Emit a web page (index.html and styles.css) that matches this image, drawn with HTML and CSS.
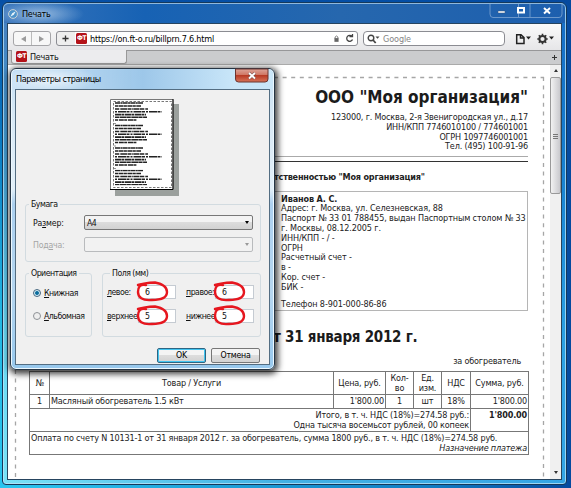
FILE: index.html
```html
<!DOCTYPE html>
<html lang="ru">
<head>
<meta charset="utf-8">
<title>Печать</title>
<link rel="stylesheet" href="styles.css">
</head>
<body>
<main class="window">
  <header class="titlebar">
    <svg class="compass" viewBox="0 0 10 10"><circle cx="5" cy="5" r="4.4" fill="#4d93ca" stroke="#c7d0d5"/><path d="M7.8 2.2 4.2 4.2 2.3 7.8 5.8 5.8Z" fill="#e9f5fb"/></svg>
    <span class="win-name">Печать</span>
    <div class="win-buttons">
      <svg viewBox="0 0 72 14"><path d="M0 0V10Q0 13.5 3 13.5H69Q72 13.5 72 10V0M28.500 0V13M40 0V13" transform="translate(-1 0)" fill="none" stroke="#6b97cb"/><path d="M7 7h7v2H7Z" fill="#fff" stroke="#3a5578" stroke-width=".5"/><path d="M27 4h6v4.500h-6Z" fill="none" stroke="#fff" stroke-width="2"/><path d="M53 4l6 5.500M59 4l-6 5.500" stroke="#fff" stroke-width="2"/></svg>
    </div>
  </header>
  <div class="client">
    <nav class="toolbar">
      <div class="navs"><i class="back"></i><i class="fwd"></i></div>
      <div class="address"><svg class="plus" viewBox="0 0 8 8"><path d="M4 .5v7M.5 4h7" stroke="#333" stroke-width="1.500"/></svg><b class="fav">ФТ</b><span class="url">https://on.ft-o.ru/billprn.7.6.html</span>
        <svg class="lock" viewBox="0 0 6 8"><path d="M1.300 4V2.200Q3-.3 4.700 2.200V4" fill="none" stroke="#666"/><path d="M.5 3.500h5V8h-5Z" fill="#666"/></svg>
        <svg class="reload" viewBox="0 0 9 9"><path d="M7 2.400A3 3 0 1 0 7.500 5.500M4.500 2.700H7.500V0" fill="none" stroke="#444" stroke-width="1.300"/></svg></div>
      <div class="search"><svg viewBox="0 0 13 10"><circle cx="4" cy="4" r="2.800" fill="none" stroke="#444" stroke-width="1.400"/><path d="M6 6l2.700 3" stroke="#444" stroke-width="1.800"/><path d="M8.500 2.500h4l-2 2.200Z" fill="#444"/></svg><span>Google</span></div>
      <svg class="tools" viewBox="0 0 40 12"><path d="M2.700 1.800H7L10 4.500V10.500H2.700ZM6.500 2V5H10" fill="none" stroke="#222" stroke-width="1.500"/><path d="M12 3.500h5l-2.500 3ZM35 3.500h5l-2.500 3Z" fill="#222"/><circle cx="28.500" cy="6" r="3.100" fill="none" stroke="#333" stroke-width="2"/><path d="M28.500 .8V2.500M28.500 9.500V11.200M23.300 6H25M32 6h1.700M24.800 2.300l1.400 1.400M30.800 8.300l1.400 1.400M32.200 2.300l-1.400 1.400M26.200 8.300l-1.400 1.400" stroke="#333" stroke-width="1.600"/></svg>
    </nav>
    <div class="tabs"><div class="tab"><b class="fav">ФТ</b><span>Печать</span></div><svg viewBox="0 0 7 7"><path d="M3.500 1v5M1 3.500h5" stroke="#333"/></svg></div>
    <div class="view">
      <div class="page">
        <svg class="cut" viewBox="0 0 544 414"><path d="M8 12.500H536M535.500 12V414" fill="none" stroke="#a6a6a6" stroke-width="1.300" stroke-dasharray="4 4.600"/><path d="M7.500 12.500V414" fill="none" stroke="#a6a6a6" stroke-width="1.300" stroke-dasharray="4 4.600"/></svg>
        <article class="bill">
          <h1><span>ООО "Моя организация"</span></h1>
          <div class="requisites">
            <p>123000, г. Москва, 2-я Звенигородская ул., д.17</p>
            <p>ИНН/КПП 7746010100 / 774601001</p>
            <p>ОГРН 1097746001001</p>
            <p>Тел. (495) 100-91-96</p>
          </div>
          <div class="rules"></div>
          <p class="supplier">тственностью "Моя организация"</p>
          <div class="payer">
            <p><b>Иванов А. С.</b></p><p>Адрес: г. Москва, ул. Селезневская, 88</p><p>Паспорт № 33 01 788455, выдан Паспортным столом № 33</p><p>г. Москвы, 08.12.2005 г.</p><p>ИНН/КПП - / -</p><p>ОГРН</p><p>Расчетный счет -</p><p>в -</p><p>Кор. счет -</p><p>БИК -</p><p class="tel">Телефон 8-901-000-86-86</p>
          </div>
          <h2>от 31 января 2012 г.</h2>
          <p class="subject">за обогреватель</p>
          <table>
            <colgroup><col class="c1"><col class="c2"><col class="c3"><col class="c4"><col class="c5"><col class="c6"><col class="c7"></colgroup>
            <tr class="head"><th>№</th><th>Товар / Услуги</th><th>Цена, руб.</th><th>Кол-<br>во</th><th>Ед.<br>изм.</th><th>НДС</th><th>Сумма, руб.</th></tr>
            <tr class="item"><td class="mid">1</td><td>Масляный обогреватель 1.5 кВт</td><td class="num">1'800.00</td><td class="mid">1</td><td class="mid">шт</td><td class="mid">18%</td><td class="num">1'800.00</td></tr>
            <tr class="total"><td class="num" colspan="6">Итого, в т. ч. НДС (18%)=274.58 руб.:<br>Одна тысяча восемьсот рублей, 00 копеек</td><td class="num"><b>1'800.00</b></td></tr>
            <tr class="total"><td colspan="7" class="pay">Оплата по счету N 10131-1 от 31 января 2012 г. за обогреватель, сумма 1800 руб., в т. ч. НДС (18%)=274.58 руб.<em>Назначение платежа</em></td></tr>
          </table>
        </article>
      </div>
      <div class="scroll"><i class="up"></i><div class="thumb"></div><i class="down"></i></div>
    </div>
  </div>
</main>

<section class="dialog">
  <header class="dlg-title"><span>Параметры страницы</span>
    <svg viewBox="0 0 34 14"><defs><linearGradient id="red" x2="0" y2="1"><stop offset="0" stop-color="#dda59a"/><stop offset=".48" stop-color="#cf7461"/><stop offset=".5" stop-color="#b83b25"/><stop offset="1" stop-color="#d8755b"/></linearGradient></defs><path d="M.5 0H33V10Q33 13 30 13H3.500Q.5 13 .5 10Z" fill="url(#red)" stroke="#6d342f"/><path d="M14 4l6 5.500M20 4l-6 5.500" stroke="#735050" stroke-width="3"/><path d="M14 4l6 5.500M20 4l-6 5.500" stroke="#fff" stroke-width="1.800"/></svg>
  </header>
  <div class="dlg-body">
    <svg class="sheet" viewBox="0 0 69 97"><path d="M5 5H69V97H5Z" fill="#9ba09d"/><path d="M.5 .5H63V90.500H.5Z" fill="#fff" stroke="#777"/><path d="M63 0V90.500H0" fill="none" stroke="#000"/><path d="M3.500 2.500H61.500V88.500H3.500Z" fill="none" stroke="#555" stroke-width=".8" stroke-dasharray="2.500 1.500"/>
      <defs><g id="lines" fill="none" stroke="#222" stroke-width="1.600"><path d="M5 4H33" stroke-dasharray="5 .4 2 .3"/><path d="M5 7H31" stroke-dasharray="3 .5 5 .4"/><path d="M5 10H38" stroke-dasharray="4 .7 1 .3 6 .5"/><path d="M5 12.800H52" stroke-dasharray="2 1 8 .5 3 1"/><path d="M5 15.600H36" stroke-dasharray="6 .4 3 .6"/><path d="M5 18.300H37" stroke-dasharray="4 .5 7 .3"/><path d="M5 21H27" stroke-dasharray="3 .8 5 .4"/></g></defs>
      <use href="#lines"/><use href="#lines" y="22.500"/><use href="#lines" y="45"/><use href="#lines" y="67.500" clip-path="inset(0 0 3px 0)"/>
      <path d="M4.500 24.500h1M4.500 47h1M4.500 69.500h1" stroke="#333"/></svg>
    <fieldset class="paper"><legend>Бумага</legend>
      <label>Ра<u>з</u>мер:</label><div class="select"><span>A4</span><i></i></div>
      <label class="off">Под<u>а</u>ча:</label><div class="select off"><span></span><i></i></div>
    </fieldset>
    <div class="groups">
      <fieldset class="orient"><legend>Ориентация</legend>
        <label><i class="radio on"></i><span><u>К</u>нижная</span></label>
        <label><i class="radio"></i><span><u>А</u>льбомная</span></label>
      </fieldset>
      <fieldset class="margins"><legend>Поля (мм)</legend>
        <label><u>л</u>евое:</label><div class="field">6<svg viewBox="0 0 33 21"><path d="M2 4Q8 2 19 1.500C27 3 31 6 31 11C31 17 25 19 16 19C6 20 2 16 2 11C2 6 4 3 10 4" /></svg></div>
        <label class="right"><u>п</u>равое:</label><div class="field">6<svg viewBox="0 0 33 21"><path d="M2 4Q8 2 19 1.500C27 3 31 6 31 11C31 17 25 19 16 19C6 20 2 16 2 11C2 6 4 3 10 4" /></svg></div>
        <label><u>в</u>ерхнее</label><div class="field">5<svg viewBox="0 0 33 21"><path d="M2 4Q8 2 19 1.500C27 3 31 6 31 11C31 17 25 19 16 19C6 20 2 16 2 11C2 6 4 3 10 4" /></svg></div>
        <label class="right"><u>н</u>ижнее</label><div class="field">5<svg viewBox="0 0 33 21"><path d="M2 4Q8 2 19 1.500C27 3 31 6 31 11C31 17 25 19 16 19C6 20 2 16 2 11C2 6 4 3 10 4" /></svg></div>
      </fieldset>
    </div>
    <div class="actions"><button class="ok">OK</button><button>Отмена</button></div>
  </div>
</section>
</body>
</html>
```
FILE: styles.css
```css
* { box-sizing: border-box; }
body, p, h1, h2, fieldset { margin: 0; padding: 0; }
i { font-style: normal; }
svg { display: block; flex: none; overflow: visible; }
body {
  width: 571px; height: 488px; overflow: hidden; position: relative; padding: 2px 4px 4px 2px;
  font: 9px/10px "DejaVu Sans Condensed", "DejaVu Sans", sans-serif; font-stretch: condensed;
  color: #222;
  background: linear-gradient(90deg, transparent 0 2%, rgba(0,76,165,.6) 75%, #064a9f 100%), linear-gradient(#0750a6 0, #0875bf 25%, #22b8e4 65%, #29c5ef 100%);
}
.window {
  width: 565px; height: 483px; border: 1px solid #15395b; border-radius: 6px 6px 4px 4px;
  box-shadow: inset 0 0 0 1px rgba(190,230,250,.75); padding: 0 4px 4px;
  background: linear-gradient(90deg, rgba(255,255,255,.18), rgba(30,110,200,.4) 50%, rgba(20,120,215,.55)), linear-gradient(#1c60b0, #1784c6 30%, #48d2f2 70%, #5bdcf5);
}
.titlebar { height: 20px; display: flex; align-items: center; margin: 0 -3px; padding: 0 2px 0 4px;
  background: radial-gradient(ellipse 45px 13px at 35px 10px, rgba(205,225,243,.65), transparent), linear-gradient(90deg, #3a76bc, #1762b4 25%, #2667ae 60%, #1d5fae); border-radius: 5px 5px 0 0; border-top: 1px solid #8fb8dc; }
.compass { width: 10px; height: 10px; margin-right: 4px; }
.win-name { color: #000; letter-spacing: -.3px; }
.win-buttons { margin-left: auto; align-self: flex-start; width: 72px; }
.win-buttons svg { width: 72px; height: 14px; }
.client { border: 1px solid #26445f; height: 457px; background: #fff; display: flex; flex-direction: column; width: 555px; }
.toolbar { height: 26px; flex: none; display: flex; align-items: center; padding: 3px 7px 0 5px; background: linear-gradient(#fafafa, #e6e6e8); }
.navs { width: 38px; height: 15px; border: 1px solid #a5a5a8; border-radius: 3px; display: flex; justify-content: space-around; align-items: center; background: linear-gradient(90deg, transparent 17.500px, #bbb 17.500px 18.500px, transparent 18.500px), #f7f7f7; margin-right: 5px; }
.back, .fwd { width: 0; height: 0; border: 3px solid transparent; }
.back { border-right: 5px solid #9b9b9b; border-left: 0; }
.fwd { border-left: 5px solid #9b9b9b; border-right: 0; }
.address { width: 302px; height: 15px; border: 1px solid #8b8c92; border-radius: 3px; display: flex; align-items: center; background: linear-gradient(90deg, #eee 18px, #fff 18px); padding-right: 3px; }
.plus { width: 7px; height: 7px; margin: 0 7px 0 5px; }
.fav { width: 11px; height: 11px; border-radius: 1.500px; background: #b41319; color: #fff; font-size: 6.500px; line-height: 11px; text-align: center; letter-spacing: -.5px; flex: none; }
.url { margin-left: 3px; color: #000; letter-spacing: -.2px; }
.lock { width: 5px; height: 7px; margin-left: auto; margin-right: 6px; }
.reload { width: 9px; height: 9px; }
.search { width: 142px; height: 15px; border: 1px solid #8b8c92; border-radius: 4px; margin-left: 5px; display: flex; align-items: center; background: #fff; color: #858585; padding-left: 3px; gap: 3px; letter-spacing: -.1px; }
.search svg { width: 13px; height: 10px; }
.tools { width: 40px; height: 12px; margin-left: 9px; }
.tabs { height: 15px; flex: none; background: #cbccce; border-top: 1px solid #979799; border-bottom: 1px solid #aaa; display: flex; align-items: center; justify-content: space-between; padding-right: 3px; }
.tabs svg { width: 7px; height: 7px; }
.tab { width: 116px; height: 14px; margin-left: 3px; margin-top: -1px; background: #ececee; border: 1px solid #999; border-top: 0; border-radius: 0 0 3px 3px; padding-left: 4px; display: flex; align-items: center; gap: 3px; color: #111; letter-spacing: -.3px; }
.view { flex: 1; min-height: 0; display: flex; }
.page { position: relative; flex: 1; min-width: 0; }
.cut { position: absolute; left: 0; top: 0; width: 544px; height: 414px; }
.bill { width: 499px; margin-left: 21px; padding-top: 21px; letter-spacing: -.18px; }
h1 { font-size: 17px; line-height: 22px; text-align: right; letter-spacing: -.02px; color: #1b1b1b; }
.requisites { text-align: right; padding-top: 5px; }
.requisites p, .payer p { line-height: 9.800px; height: 9.800px; white-space: nowrap; }
.rules { margin-top: 4px; height: 6px; border-top: 1px solid #aaa; border-bottom: 1px solid #333; }
.supplier { padding-left: 245px; margin-top: 10px; font-weight: bold; white-space: nowrap; }
.payer { margin-top: 8.500px; height: 120px; border: 1px solid #b5b5b5; padding: 3px 0 0 251px; }
.payer { letter-spacing: -.12px; }
.payer .tel { margin-top: 7px; }
h2 { padding-left: 235px; margin-top: 15px; font-size: 15px; line-height: 22px; letter-spacing: -.25px; white-space: nowrap; color: #1b1b1b; }
.subject { text-align: right; padding-right: 7px; margin-top: 8px; line-height: 10px; margin-bottom: 5px; }
table { border-collapse: collapse; table-layout: fixed; width: 500px; }
.c1 { width: 20px; } .c2 { width: 284px; } .c3 { width: 52px; } .c4 { width: 28px; } .c5 { width: 28px; } .c6 { width: 29px; } .c7 { width: 58px; }
th, td { border: 1px solid #777; padding: 0 1px; line-height: 10px; white-space: nowrap; }
th { font-weight: normal; }
.head { height: 23px; } .item { height: 14px; } .total { height: 23px; }
.total td { vertical-align: top; padding-top: 1px; }
.num { text-align: right; } .mid { text-align: center; }
.pay em { display: block; text-align: right; }
.scroll { width: 11px; background: #f0f0f0; display: flex; flex-direction: column; align-items: center; }
.up, .down { width: 0; border: 2.500px solid transparent; flex: none; }
.up { border-bottom: 3px solid #333; border-top: 0; margin: 4px 0 5px; }
.down { border-top: 3px solid #333; border-bottom: 0; margin: auto 0 5px; }
.thumb { width: 11px; height: 117px; border: 1px solid #999; border-radius: 2px; background: linear-gradient(transparent 56px, #777 56px 57px, transparent 57px 58px, #777 58px 59px, transparent 59px 60px, #777 60px 61px, transparent 61px) 50% / 5px 100% no-repeat, linear-gradient(90deg, #f2f2f2, #c9c9cd); }

.dialog { position: absolute; left: 10px; top: 68px; width: 265px; height: 302px; border: 1px solid #263544; border-radius: 6px; padding: 0 4px 4px;
  background: linear-gradient(#c5e0f5, #d7e8f5 15%, #e2eff8 40%, #acd0ef 45%, #b5d6f0 75%, #97c8ed); box-shadow: inset 0 0 0 1px #ecf8ff, 1px 2px 6px 2px rgba(0,0,0,.75); }
.dlg-title { height: 20px; display: flex; justify-content: space-between; color: #000; line-height: 20px; letter-spacing: -.45px; background: radial-gradient(ellipse 45px 14px at 40px 10px, rgba(255,255,255,.7), transparent), linear-gradient(90deg, transparent, #9dc7e9 50%, #c9e6f9 85%); margin: 0 -3px; padding: 0 4px; border-radius: 5px 5px 0 0; }
.dlg-title svg { width: 34px; height: 14px; }
.dlg-body { height: 276px; border: 1px solid #536d82; background: #f0f0f0; color: #111; font-size: 8.700px; letter-spacing: -.5px; }
.sheet { width: 69px; height: 97px; margin: 9px 0 0 94px; }
fieldset { border: 1px solid #d2dbe0; border-radius: 3px; min-width: 0; }
legend { padding: 0 2px; margin-left: 3px; line-height: 10px; height: 10px; }
.paper { width: 236px; height: 63px; margin: 3px 0 0 9px; display: grid; grid-template-columns: 58px 169px; grid-template-rows: 15px 15px; row-gap: 7px; align-items: center; align-content: start; padding-top: 6px; }
.paper label { padding-left: 7px; letter-spacing: -.2px; }
.off { color: #a5a5a5; }
u { text-underline-offset: 1px; text-decoration-thickness: 1px; }
.select { height: 15px; border: 1px solid #777; border-radius: 2px; background: linear-gradient(#f3f3f3 48%, #dcdcdc 50%, #d2d2d2); display: flex; align-items: center; justify-content: space-between; padding: 0 3px 0 2px; }
.select.off { border-color: #b9bbbd; background: #f2f2f2; }
.select i { border: 2.500px solid transparent; border-top: 3px solid #000; border-bottom: 0; }
.select.off i { border-top-color: #999; }
.groups { display: flex; gap: 10px; margin: 6px 0 0 9px; }
.orient { width: 67px; height: 69px; }
.margins { width: 159px; height: 69px; display: grid; grid-template-columns: 31px 38px 39px 39px; grid-template-rows: 15px 15px; row-gap: 9px; align-items: center; padding: 6px 0 0 4px; align-content: start; }
.orient label { display: flex; align-items: center; gap: 3px; height: 12px; margin: 9px 0 11px 7px; white-space: nowrap; }
.margins label { white-space: nowrap; }
.margins .right { padding-left: 10px; }
.radio { width: 8px; height: 8px; flex: none; border-radius: 50%; border: 1px solid #8e9296; background: #eee; }
.radio.on { border-color: #47677f; background: radial-gradient(#0c6d9d 0 35%, #d5edf7 55%); }
.field { position: relative; height: 14px; background: #fff; border: 1px solid #c5cbd2; padding: 1px 0 0 6px; }
.field svg { position: absolute; left: -3px; top: -5px; width: 33px; height: 21px; fill: none; stroke: #e6171f; stroke-width: 2.400; stroke-linecap: round; }
.actions { display: flex; justify-content: flex-end; gap: 5px; padding: 11px 9px 0 0; }
button { width: 49px; height: 15px; font: inherit; letter-spacing: -.2px; line-height: 11px; padding: 0; border: 1px solid #777; border-radius: 2px; background: linear-gradient(#f4f4f4 48%, #ddd 50%, #d2d2d2); color: #000; }
.ok { border-color: #2d6583; box-shadow: inset 0 0 0 1px #43c5f0; }
```
